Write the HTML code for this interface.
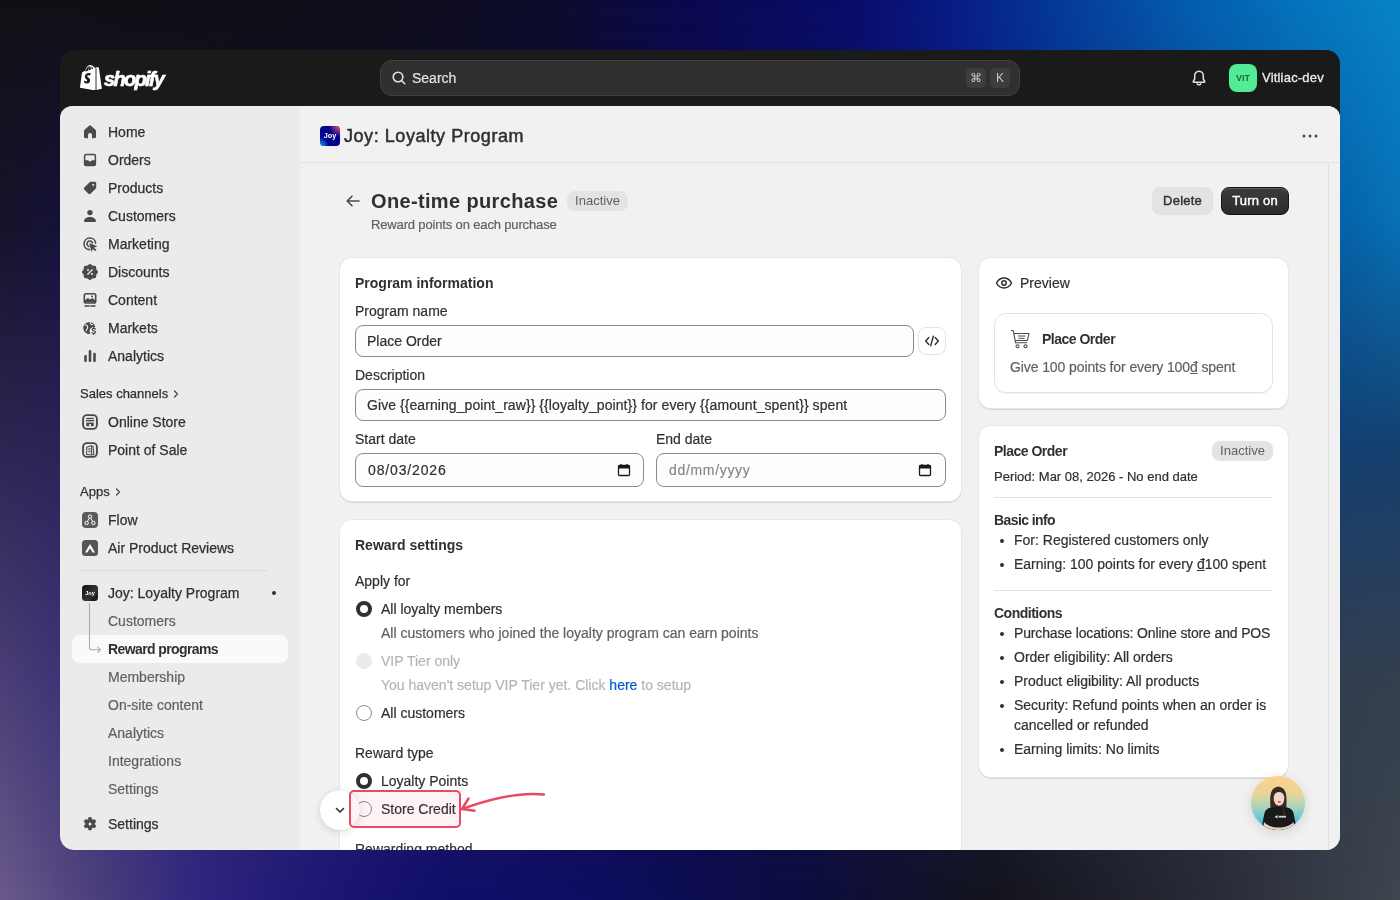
<!DOCTYPE html>
<html><head><meta charset="utf-8">
<style>
*{box-sizing:border-box;margin:0;padding:0}
html,body{width:1400px;height:900px;overflow:hidden}
body{position:relative;font-family:"Liberation Sans",sans-serif;color:#303030;background:#111}
.abs{position:absolute}
.win{will-change:transform;position:absolute;left:60px;top:50px;width:1280px;height:800px;border-radius:14px;overflow:hidden;background:#1a1a1a}
.content{position:absolute;left:0;top:56px;width:1280px;height:744px;background:#ebebeb;border-radius:12px 12px 0 0;overflow:hidden}
.main{position:absolute;left:240px;top:0;width:1040px;height:744px;background:#f1f1f1}
.t{position:absolute;white-space:nowrap;line-height:20px;font-size:14px;-webkit-text-stroke:.2px currentColor}
.t.b{-webkit-text-stroke:0}
.nav{position:absolute;left:48px;font-size:14px;line-height:20px;color:#303030;-webkit-text-stroke:0.25px #303030;white-space:nowrap}
.sub{position:absolute;left:48px;font-size:14px;line-height:20px;color:#616161;white-space:nowrap;-webkit-text-stroke:.2px #616161}
.ico{position:absolute;left:22px}
.card{position:absolute;background:#fff;border-radius:12px;box-shadow:0 1px 0 rgba(26,26,26,.07),0 0 0 1px rgba(0,0,0,.04),inset 0 -1px 0 rgba(0,0,0,.1)}
.b{font-weight:700}
.g{color:#616161}
.inp{position:absolute;border:1px solid #8a8a8a;border-radius:8px;background:#fdfdfd}
.radio{position:absolute;width:16px;height:16px;border-radius:50%;border:1px solid #8a8a8a;background:#fff}
.radio.on{border:4px solid #303030}
.badge{position:absolute;height:20px;line-height:20px;padding:0 8px;border-radius:8px;background:#e3e3e3;color:#616161;font-size:13px}
ul.bl{position:absolute;list-style:none}
</style></head><body>
<div class="abs" style="left:0;top:0;width:1400px;height:900px;background:linear-gradient(90deg,#111014 0%,#100f16 14%,#0f0e1d 28%,#0e0c2e 40%,#0a0950 50%,#0a0c6a 61%,#081c85 68%,#053896 75%,#0560b0 86%,#0574bd 93%,#0884c8 100%)"></div>
<div class="abs" style="left:0;top:0;width:1400px;height:900px;background:linear-gradient(90deg,#16132a 0%,#15123a 4.3%,#100f20 25%,#0e0c30 40%,#0a0950 50%,#081a80 70%,#0562a8 95.7%,#0870b5 100%);-webkit-mask-image:linear-gradient(180deg,transparent 0px,#000 225px)"></div>
<div class="abs" style="left:0;top:0;width:1400px;height:900px;background:linear-gradient(90deg,#2e2652 0%,#2a2458 4.3%,#0b0a50 50%,#143f70 95.7%,#153f6e 100%);-webkit-mask-image:linear-gradient(180deg,transparent 225px,#000 450px)"></div>
<div class="abs" style="left:0;top:0;width:1400px;height:900px;background:linear-gradient(90deg,#4a3e75 0%,#3e3478 4.3%,#0c0c40 50%,#323e50 95.7%,#343f4f 100%);-webkit-mask-image:linear-gradient(180deg,transparent 450px,#000 675px)"></div>
<div class="abs" style="left:0;top:0;width:1400px;height:900px;background:linear-gradient(90deg,#6a5a8a 0%,#4a3e7c 7%,#2f2680 14%,#1e1876 22%,#110e6c 31%,#0d0d60 43%,#0c0c40 57%,#13131c 71%,#282a35 86%,#3e464e 100%);-webkit-mask-image:linear-gradient(180deg,transparent 675px,#000 900px)"></div>

<div class="win">
  <!-- top bar -->
  <div id="topbar">
    <svg class="abs" style="left:20px;top:15px" width="22" height="25" viewBox="0 0 22 25">
      <path d="M15.2 3.2c0 0-.3.1-.7.2-.1-.4-.3-.8-.5-1.2C13.4 1.1 12.6.6 11.7.6c-.1 0-.1 0-.2 0l-.1-.1C11 0 10.5-.1 10 0 8.8 0 7.6.9 6.6 2.5c-.7 1.1-1.2 2.5-1.4 3.6-1.4.4-2.3.7-2.4.8-.7.2-.7.2-.8.9C1.9 8.3 0 22.8 0 22.8L15.6 25.5 15.2 3.2zM10.9 4.4c-.8.3-1.8.6-2.7.8.3-1 .8-2.1 1.4-2.7.2-.2.5-.5.9-.7.3.7.4 1.7.4 2.6zM9.6 1.3c.3 0 .6.1.8.2-.4.2-.7.5-1 .8-.8.9-1.5 2.3-1.7 3.6-.8.2-1.5.5-2.2.7C5.9 4.6 7.6 1.3 9.6 1.3zM11.700 4.2c0-.8-.1-1.900-.5-2.800 1.200.2 1.700 1.500 2 2.300-.5.1-1 .3-1.500.5z" fill="#fff"/>
      <path d="M16.300 3.100c-.1 0-.4 0-.5 0s-1.200-1.200-1.400-1.300V25.400L22 23.700S18.900 2.800 18.900 2.700c0-.1-.2-.2-.3-.2s-2.300-.4-2.300-.4z" fill="#fff"/>
      <path d="M16 3.200v22.300" stroke="#1a1a1a" stroke-width=".9"/>
      <path d="M10.900 8.300l-.8 2.300s-.7-.4-1.600-.4c-1.300 0-1.300.8-1.300 1 0 1.100 2.900 1.500 2.900 4.100 0 2-1.300 3.300-3 3.300-2 0-3.100-1.300-3.100-1.300l.5-1.800s1.100.9 1.900.9c.6 0 .8-.5.8-.8 0-1.400-2.400-1.500-2.400-3.800 0-1.900 1.400-3.800 4.200-3.800 1.100 0 1.600.3 1.600.3z" fill="#1a1a1a"/>
    </svg>
    <div class="t b" style="left:44px;top:17px;font-size:20px;line-height:24px;font-style:italic;letter-spacing:-1.7px;color:#fff;-webkit-text-stroke:.6px #fff">shopify</div>
    <div class="abs" style="left:320px;top:10px;width:640px;height:36px;border-radius:12px;background:#303030;border:1px solid #404040"></div>
    <svg class="abs" style="left:331px;top:20px" width="16" height="16" viewBox="0 0 16 16"><circle cx="7" cy="7" r="4.8" fill="none" stroke="#e3e3e3" stroke-width="1.6"/><path d="M10.500 10.500l3.200 3.200" stroke="#e3e3e3" stroke-width="1.6" stroke-linecap="round"/></svg>
    <div class="t" style="left:352px;top:18px;color:#e3e3e3">Search</div>
    <div class="abs" style="left:906px;top:18px;width:20px;height:20px;border-radius:5px;background:#3d3d3d;color:#c9c9c9;font-size:12px;line-height:20px;text-align:center">&#8984;</div>
    <div class="abs" style="left:930px;top:18px;width:20px;height:20px;border-radius:5px;background:#3d3d3d;color:#c9c9c9;font-size:12px;line-height:20px;text-align:center">K</div>
    <svg class="abs" style="left:1131px;top:19px" width="16" height="18" viewBox="0 0 16 18"><path d="M8 2.200c-2.600 0-4.300 2-4.300 4.500v3.300L2.300 12.300c-.3.500 0 .9.5.9h10.400c.5 0 .8-.4.5-.9L12.300 10V6.700C12.300 4.200 10.600 2.200 8 2.200z" fill="none" stroke="#e3e3e3" stroke-width="1.5" stroke-linejoin="round"/><path d="M6.200 14.800c.4.700 1 1 1.800 1s1.400-.3 1.800-1" fill="none" stroke="#e3e3e3" stroke-width="1.5" stroke-linecap="round"/></svg>
    <div class="abs" style="left:1169px;top:14px;width:28px;height:28px;border-radius:8px;background:#52ec94;color:#1d6a44;font-size:9px;font-weight:700;line-height:28px;text-align:center">VIT</div>
    <div class="t" style="left:1202px;top:18px;color:#ededed;font-size:13px;letter-spacing:.2px;-webkit-text-stroke:.3px #ededed">Vitliac-dev</div>
  </div>
  <div class="content">
    <div id="sidebar">
<svg class="ico" style="top:18px" width="16" height="16" viewBox="0 0 16 16"><path d="M7.100 1.700a1.400 1.400 0 0 1 1.800 0l4.600 4c.4.300.5.700.5 1.100v6c0 .8-.6 1.400-1.400 1.400H10V11a2 2 0 0 0-4 0v3.200H3.400c-.8 0-1.400-.6-1.400-1.400v-6c0-.4.200-.8.500-1.100z" fill="#4a4a4a"/></svg><div class="nav" style="top:16px">Home</div>
<svg class="ico" style="top:46px" width="16" height="16" viewBox="0 0 16 16"><path d="M4 2.600h8c.8 0 1.400.6 1.400 1.400v8c0 .8-.6 1.400-1.400 1.400H4c-.8 0-1.400-.6-1.400-1.400V4c0-.8.6-1.400 1.400-1.400z" fill="none" stroke="#4a4a4a" stroke-width="1.500"/><path d="M2 8.200h4l2 1.600 2-1.600h4V12a2 2 0 0 1-2 2H4a2 2 0 0 1-2-2z" fill="#4a4a4a"/></svg><div class="nav" style="top:44px">Orders</div>
<svg class="ico" style="top:74px" width="16" height="16" viewBox="0 0 16 16"><path d="M8.600 1.800h4.200c.8 0 1.400.6 1.400 1.400v4.200c0 .4-.1.700-.4 1l-5.300 5.300c-.6.600-1.500.600-2.100 0L2.300 9.600c-.6-.6-.6-1.500 0-2.100L7.600 2.200c.3-.3.600-.4 1-.4z" fill="#4a4a4a"/><rect x="10.400" y="4" width="1.800" height="1.800" rx=".4" fill="#ebebeb"/></svg><div class="nav" style="top:72px">Products</div>
<svg class="ico" style="top:102px" width="16" height="16" viewBox="0 0 16 16"><circle cx="8" cy="4.600" r="2.700" fill="#4a4a4a"/><path d="M2 13.100c0-2.300 2.600-4.100 6-4.100s6 1.800 6 4.100c0 .5-.4.900-.9.900H2.900c-.5 0-.9-.4-.9-.9z" fill="#4a4a4a"/></svg><div class="nav" style="top:100px">Customers</div>
<svg class="ico" style="top:130px" width="16" height="16" viewBox="0 0 16 16"><path d="M13.600 7.200A5.800 5.800 0 1 0 7.200 13.600" fill="none" stroke="#4a4a4a" stroke-width="1.600" stroke-linecap="round"/><path d="M10.400 6.800A2.800 2.800 0 1 0 6.800 10.400" fill="none" stroke="#4a4a4a" stroke-width="1.600" stroke-linecap="round"/><path d="M7.600 7.600l7.200 2.600-3 1.300 2.400 2.400-1 1-2.400-2.400-1.300 3z" fill="#4a4a4a" stroke="#4a4a4a" stroke-width=".5" stroke-linejoin="round"/></svg><div class="nav" style="top:128px">Marketing</div>
<svg class="ico" style="top:158px" width="16" height="16" viewBox="0 0 16 16"><path d="M8.00,0.40 L10.41,2.18 L13.37,2.63 L13.82,5.59 L15.60,8.00 L13.82,10.41 L13.37,13.37 L10.41,13.82 L8.00,15.60 L5.59,13.82 L2.63,13.37 L2.18,10.41 L0.40,8.00 L2.18,5.59 L2.63,2.63 L5.59,2.18z" fill="#4a4a4a" stroke="#4a4a4a" stroke-width="1.200" stroke-linejoin="round"/><path d="M5.800 10.200l4.400-4.400" stroke="#ebebeb" stroke-width="1.300" stroke-linecap="round"/><circle cx="6" cy="6" r="1" fill="#ebebeb"/><circle cx="10" cy="10" r="1" fill="#ebebeb"/></svg><div class="nav" style="top:156px">Discounts</div>
<svg class="ico" style="top:186px" width="16" height="16" viewBox="0 0 16 16"><rect x="2.300" y="1.800" width="11.400" height="9.200" rx="1.800" fill="none" stroke="#4a4a4a" stroke-width="1.600"/><path d="M3 10.300V8.200l2.800-2.300 2.200 1.600 2.200-1.400 2.800 2v2.200z" fill="#4a4a4a"/><rect x="9.200" y="3.600" width="1.800" height="1.600" fill="#4a4a4a"/><path d="M3 14h4.200M8.800 14H13" stroke="#4a4a4a" stroke-width="1.400" stroke-linecap="round"/></svg><div class="nav" style="top:184px">Content</div>
<svg class="ico" style="top:214px" width="16" height="16" viewBox="0 0 16 16"><path d="M13.200 6.800A6 6 0 1 0 8 14" fill="#4a4a4a"/><path d="M3.200 4.800c1.600.3 2.700 1.400 2.400 3-.2 1.200-1.400 1.600-1.400 3M8.200 2.200c-.2 1.200.7 2.200 2.300 2.400" fill="none" stroke="#ebebeb" stroke-width="1.100" stroke-linecap="round"/><circle cx="11.800" cy="11.200" r="4.200" fill="#ebebeb"/><path d="M13.300 9c-.4-.5-1-.7-1.600-.7-.8 0-1.500.4-1.500 1.200 0 1.500 3.200 1 3.200 2.600 0 .8-.7 1.300-1.600 1.300-.7 0-1.300-.3-1.700-.8M11.700 7.400v1M11.700 13.400v1" fill="none" stroke="#4a4a4a" stroke-width="1.300" stroke-linecap="round"/></svg><div class="nav" style="top:212px">Markets</div>
<svg class="ico" style="top:242px" width="16" height="16" viewBox="0 0 16 16"><rect x="2.200" y="7" width="2.600" height="7" rx="1.100" fill="#4a4a4a"/><rect x="6.700" y="2" width="2.600" height="12" rx="1.100" fill="#4a4a4a"/><rect x="11.200" y="4.800" width="2.600" height="9.200" rx="1.100" fill="#4a4a4a"/></svg><div class="nav" style="top:240px">Analytics</div>
<div class="t" style="left:20px;top:278px;font-size:13px;color:#303030;-webkit-text-stroke:.25px #303030">Sales channels</div><svg class="abs" style="left:111px;top:283px" width="10" height="10" viewBox="0 0 10 10"><path d="M3.500 2l3 3-3 3" fill="none" stroke="#4a4a4a" stroke-width="1.300" stroke-linecap="round" stroke-linejoin="round"/></svg>
<div class="t" style="left:20px;top:376px;font-size:13px;color:#303030;-webkit-text-stroke:.25px #303030">Apps</div><svg class="abs" style="left:53px;top:381px" width="10" height="10" viewBox="0 0 10 10"><path d="M3.500 2l3 3-3 3" fill="none" stroke="#4a4a4a" stroke-width="1.300" stroke-linecap="round" stroke-linejoin="round"/></svg>
<svg class="ico" style="top:308px" width="16" height="16" viewBox="0 0 16 16"><rect x="1.100" y="1.100" width="13.800" height="13.800" rx="3.800" fill="none" stroke="#4a4a4a" stroke-width="1.900"/><rect x="4.300" y="3.800" width="7.400" height="1.400" fill="#4a4a4a"/><path d="M3.800 5.900h8.400v.6c0 .6-.5 1-1 1s-1-.4-1.100-1c-.1.6-.6 1-1.100 1s-1-.4-1-1c0 .6-.5 1-1 1s-1-.4-1.100-1c-.1.6-.6 1-1.100 1s-1-.4-1-1z" fill="#4a4a4a"/><rect x="4.300" y="8.600" width="7.400" height="3.600" fill="#4a4a4a"/><rect x="7.100" y="10" width="1.800" height="2.200" fill="#ebebeb"/></svg><div class="nav" style="top:306px">Online Store</div>
<svg class="ico" style="top:336px" width="16" height="16" viewBox="0 0 16 16"><rect x="1.100" y="1.100" width="13.800" height="13.800" rx="3.800" fill="none" stroke="#4a4a4a" stroke-width="1.900"/><path d="M4.800 5.200l3.900-1.400 2.300.4.800 8.300-2.300.5-4.900-.6z" fill="none" stroke="#4a4a4a" stroke-width="1.100" stroke-linejoin="round"/><path d="M9.500 4.200l.2 8.900" stroke="#4a4a4a" stroke-width="1"/><path d="M8.300 6.600c-.4-.3-1.700-.3-1.700.6 0 1 1.700 1 1.700 2.100 0 .9-1.300 1-1.900.5" fill="none" stroke="#4a4a4a" stroke-width="1" stroke-linecap="round"/></svg><div class="nav" style="top:334px">Point of Sale</div>
<svg class="ico" style="top:406px" width="16" height="16" viewBox="0 0 16 16"><rect x="0" y="0" width="16" height="16" rx="4" fill="#5c5c5c"/><circle cx="8" cy="4.600" r="1.700" fill="none" stroke="#fff" stroke-width="1"/><circle cx="4.600" cy="11" r="1.700" fill="none" stroke="#fff" stroke-width="1"/><circle cx="11.400" cy="11" r="1.700" fill="none" stroke="#fff" stroke-width="1"/><path d="M7.400 6.200L5.400 9.500M8.600 6.200l2 3.300" stroke="#fff" stroke-width="1"/></svg><div class="nav" style="top:404px">Flow</div>
<svg class="ico" style="top:434px" width="16" height="16" viewBox="0 0 16 16"><rect x="0" y="0" width="16" height="16" rx="3.500" fill="#555"/><path d="M3 12.500L8 4l5 8.500h-2.400L8 8.300 5.400 12.500z" fill="#fff"/></svg><div class="nav" style="top:432px">Air Product Reviews</div>
<div class="abs" style="left:20px;top:464px;width:188px;height:1px;background:#dcdcdc"></div>
<svg class="ico" style="top:479px" width="16" height="16" viewBox="0 0 16 16"><defs><linearGradient id="jg" x1="0" y1="0" x2="1" y2="1"><stop offset="0" stop-color="#111"/><stop offset=".6" stop-color="#333"/><stop offset="1" stop-color="#111"/></linearGradient></defs><rect x="0" y="0" width="16" height="16" rx="3.500" fill="url(#jg)"/><text x="8" y="10" font-size="5.500" font-family="Liberation Sans" font-weight="700" fill="#fff" text-anchor="middle">Joy</text></svg><div class="nav" style="top:477px">Joy: Loyalty Program</div>
<div class="abs" style="left:212px;top:485px;width:4px;height:4px;border-radius:50%;background:#303030"></div>
<div class="abs" style="left:12px;top:529px;width:216px;height:28px;border-radius:8px;background:#fafafa"></div>
<svg class="abs" style="left:28px;top:495px" width="20" height="56" viewBox="0 0 20 56"><path d="M1.500 2V46c0 2 .8 2.800 2.500 2.800h8.500" fill="none" stroke="#ababab" stroke-width="1.100"/><path d="M9.800 46.200l2.600 2.600-2.600 2.600" fill="none" stroke="#ababab" stroke-width="1.100" stroke-linecap="round" stroke-linejoin="round"/></svg>
<div class="sub" style="top:505px">Customers</div>
<div class="sub" style="top:561px">Membership</div>
<div class="sub" style="top:589px">On-site content</div>
<div class="sub" style="top:617px">Analytics</div>
<div class="sub" style="top:645px">Integrations</div>
<div class="sub" style="top:673px">Settings</div>
<div class="nav b" style="top:533px;-webkit-text-stroke:0;letter-spacing:-.6px">Reward programs</div>
<svg class="ico" style="top:710px" width="16" height="16" viewBox="0 0 16 16"><path d="M6.700 1.500h2.600l.4 1.900 1.200.7 1.800-.6 1.300 2.200-1.400 1.300v1.400l1.400 1.300-1.300 2.200-1.800-.6-1.200.7-.4 1.900H6.700l-.4-1.900-1.200-.7-1.800.6-1.300-2.200 1.400-1.300V7L2 5.700l1.300-2.200 1.800.6 1.200-.7z" fill="#4a4a4a" stroke="#4a4a4a" stroke-width=".6" stroke-linejoin="round"/><circle cx="8" cy="8" r="1.500" fill="#ebebeb"/></svg><div class="nav" style="top:708px">Settings</div>
</div>
    <div class="main">
<div class="abs" style="left:0;top:56px;width:1040px;height:1px;background:#e1e1e1"></div>
<svg class="abs" style="left:20px;top:20px" width="20" height="20" viewBox="0 0 20 20"><defs><radialGradient id="jp" cx="20" cy="0" r="11" gradientUnits="userSpaceOnUse"><stop offset="0" stop-color="#f05a6a"/><stop offset="1" stop-color="#f05a6a" stop-opacity="0"/></radialGradient><radialGradient id="jc" cx="0" cy="20" r="9" gradientUnits="userSpaceOnUse"><stop offset="0" stop-color="#10b0f0"/><stop offset="1" stop-color="#10b0f0" stop-opacity="0"/></radialGradient></defs><rect width="20" height="20" rx="4" fill="#03038e"/><rect width="20" height="20" rx="4" fill="url(#jp)"/><rect width="20" height="20" rx="4" fill="url(#jc)"/><text x="10" y="12.300" font-size="7.200" font-family="Liberation Sans" font-weight="700" fill="#fff" text-anchor="middle">Joy</text></svg>
<div class="t" style="left:44px;top:18px;font-size:18px;line-height:24px;letter-spacing:.55px;-webkit-text-stroke:.5px #303030">Joy: Loyalty Program</div>
<svg class="abs" style="left:1002px;top:28px" width="16" height="4" viewBox="0 0 16 4"><circle cx="2" cy="2" r="1.500" fill="#4a4a4a"/><circle cx="8" cy="2" r="1.500" fill="#4a4a4a"/><circle cx="14" cy="2" r="1.500" fill="#4a4a4a"/></svg>
<div class="abs" style="left:1028px;top:57px;width:1px;height:700px;background:#e1e1e1"></div>
<svg class="abs" style="left:44px;top:86px" width="18" height="18" viewBox="0 0 18 18"><path d="M15 9H3.500M8 4.200L3.200 9 8 13.800" fill="none" stroke="#4a4a4a" stroke-width="1.600" stroke-linecap="round" stroke-linejoin="round"/></svg>
<div class="t b" style="left:71px;top:82px;font-size:20px;line-height:26px;letter-spacing:.35px">One-time purchase</div>
<div class="badge" style="left:267px;top:85px;width:61px;text-align:center;padding:0">Inactive</div>
<div class="t g" style="left:71px;top:109px;font-size:13px;letter-spacing:-.15px">Reward points on each purchase</div>
<div class="abs" style="left:852px;top:81px;width:61px;height:28px;border-radius:8px;background:#e3e3e3;font-size:13px;line-height:28px;text-align:center;color:#303030;-webkit-text-stroke:.4px #303030;letter-spacing:.2px">Delete</div>
<div class="abs" style="left:921px;top:81px;width:68px;height:28px;border-radius:8px;background:linear-gradient(#3b3b3b,#2c2c2c);border:1px solid #141414;box-shadow:inset 0 1px 0 rgba(255,255,255,.18);font-size:13px;line-height:26px;text-align:center;color:#fff;-webkit-text-stroke:.4px #fff;letter-spacing:.2px">Turn on</div>
<div class="card" style="left:40px;top:152px;width:621px;height:244px"></div>
<div class="t b" style="left:55px;top:167px">Program information</div>
<div class="t" style="left:55px;top:195px">Program name</div>
<div class="inp" style="left:55px;top:219px;width:559px;height:32px"></div>
<div class="t" style="left:67px;top:225px">Place Order</div>
<div class="abs" style="left:618px;top:221px;width:28px;height:28px;border-radius:8px;border:1px solid #e3e3e3;background:#fff"></div>
<svg class="abs" style="left:624px;top:227px" width="16" height="16" viewBox="0 0 16 16"><path d="M4.800 4.500L1.700 8l3.100 3.500M11.200 4.500L14.300 8l-3.100 3.500M9.300 3.200L6.700 12.800" fill="none" stroke="#303030" stroke-width="1.400" stroke-linecap="round" stroke-linejoin="round"/></svg>
<div class="t" style="left:55px;top:259px">Description</div>
<div class="inp" style="left:55px;top:283px;width:591px;height:32px"></div>
<div class="t" style="left:67px;top:289px;letter-spacing:.07px">Give {{earning_point_raw}} {{loyalty_point}} for every {{amount_spent}} spent</div>
<div class="t" style="left:55px;top:323px">Start date</div>
<div class="t" style="left:356px;top:323px">End date</div>
<div class="inp" style="left:55px;top:347px;width:289px;height:34px"></div>
<div class="t" style="left:68px;top:354px;letter-spacing:.85px">08/03/2026</div>
<svg class="abs" style="left:317px;top:357px" width="14" height="14" viewBox="0 0 14 14"><rect x="1.500" y="2.500" width="11" height="10" rx="1" fill="none" stroke="#1a1a1a" stroke-width="1.300"/><rect x="1.500" y="2.500" width="11" height="3" fill="#1a1a1a"/><path d="M4 1v2M10 1v2" stroke="#1a1a1a" stroke-width="1.300"/></svg>
<div class="inp" style="left:356px;top:347px;width:290px;height:34px"></div>
<div class="t" style="left:369px;top:354px;letter-spacing:.68px;color:#8a8a8a">dd/mm/yyyy</div>
<svg class="abs" style="left:618px;top:357px" width="14" height="14" viewBox="0 0 14 14"><rect x="1.500" y="2.500" width="11" height="10" rx="1" fill="none" stroke="#1a1a1a" stroke-width="1.300"/><rect x="1.500" y="2.500" width="11" height="3" fill="#1a1a1a"/><path d="M4 1v2M10 1v2" stroke="#1a1a1a" stroke-width="1.300"/></svg>
<div class="card" style="left:40px;top:414px;width:621px;height:400px"></div>
<div class="t b" style="left:55px;top:429px">Reward settings</div>
<div class="t" style="left:55px;top:465px">Apply for</div>
<div class="radio on" style="left:56px;top:495px"></div>
<div class="t" style="left:81px;top:493px">All loyalty members</div>
<div class="t g" style="left:81px;top:517px">All customers who joined the loyalty program can earn points</div>
<div class="radio" style="left:56px;top:547px;background:#ebebeb;border-color:#ebebeb"></div>
<div class="t" style="left:81px;top:545px;color:#b5b5b5">VIP Tier only</div>
<div class="t" style="left:81px;top:569px;color:#b5b5b5">You haven't setup VIP Tier yet. Click <span style="color:#005bd3">here</span> to setup</div>
<div class="radio" style="left:56px;top:599px"></div>
<div class="t" style="left:81px;top:597px">All customers</div>
<div class="t" style="left:55px;top:637px">Reward type</div>
<div class="radio on" style="left:56px;top:667px"></div>
<div class="t" style="left:81px;top:665px">Loyalty Points</div>
<div class="radio" style="left:56px;top:695px"></div>
<div class="t" style="left:81px;top:693px">Store Credit</div>
<div class="t" style="left:55px;top:733px">Rewarding method</div>
<div class="card" style="left:679px;top:152px;width:309px;height:151px"></div>
<svg class="abs" style="left:695px;top:169px" width="18" height="16" viewBox="0 0 18 16"><path d="M1.500 8C3.200 4.700 5.800 3 9 3s5.800 1.700 7.500 5c-1.700 3.300-4.300 5-7.500 5S3.200 11.300 1.500 8z" fill="none" stroke="#303030" stroke-width="1.500" stroke-linejoin="round"/><circle cx="9" cy="8" r="2.200" fill="none" stroke="#303030" stroke-width="1.500"/></svg>
<div class="t" style="left:720px;top:167px">Preview</div>
<div class="abs" style="left:694px;top:207px;width:279px;height:80px;border-radius:12px;border:1px solid #e3e3e3;box-shadow:0 1px 0 rgba(0,0,0,.05)"></div>
<svg class="abs" style="left:710px;top:223px" width="22" height="22" viewBox="0 0 22 22"><path d="M1 1.500h2.200l2.400 12.300h11.600" fill="none" stroke="#4a4a4a" stroke-width="1.100" stroke-linejoin="round"/><path d="M4 4.500h15l-1.600 7H5.300" fill="none" stroke="#4a4a4a" stroke-width="1.100" stroke-linejoin="round"/><path d="M8 7h7.500M8.500 9.300h6" stroke="#4a4a4a" stroke-width="1"/><circle cx="7.500" cy="17.200" r="1.500" fill="none" stroke="#4a4a4a" stroke-width="1.100"/><circle cx="15.500" cy="17.200" r="1.500" fill="none" stroke="#4a4a4a" stroke-width="1.100"/></svg>
<div class="t b" style="left:742px;top:223px;letter-spacing:-.5px">Place Order</div>
<div class="t g" style="left:710px;top:251px;letter-spacing:-.1px">Give 100 points for every 100<span style="text-decoration:underline">đ</span> spent</div>
<div class="card" style="left:679px;top:320px;width:309px;height:352px"></div>
<div class="t b" style="left:694px;top:335px;letter-spacing:-.5px">Place Order</div>
<div class="badge" style="left:912px;top:335px;width:61px;text-align:center;padding:0">Inactive</div>
<div class="t" style="left:694px;top:361px;font-size:13px">Period: Mar 08, 2026 - No end date</div>
<div class="abs" style="left:694px;top:391px;width:279px;height:1px;background:#e3e3e3"></div>
<div class="t b" style="left:694px;top:404px;letter-spacing:-.6px">Basic info</div>
<div class="abs" style="left:700px;top:433px;width:4px;height:4px;border-radius:50%;background:#303030"></div><div class="t" style="left:714px;top:424px">For: Registered customers only</div>
<div class="abs" style="left:700px;top:457px;width:4px;height:4px;border-radius:50%;background:#303030"></div><div class="t" style="left:714px;top:448px">Earning: 100 points for every <span style="text-decoration:underline">đ</span>100 spent</div>
<div class="abs" style="left:694px;top:484px;width:279px;height:1px;background:#e3e3e3"></div>
<div class="t b" style="left:694px;top:497px;letter-spacing:-.5px">Conditions</div>
<div class="abs" style="left:700px;top:526px;width:4px;height:4px;border-radius:50%;background:#303030"></div><div class="t" style="left:714px;top:517px;letter-spacing:-.15px">Purchase locations: Online store and POS</div>
<div class="abs" style="left:700px;top:550px;width:4px;height:4px;border-radius:50%;background:#303030"></div><div class="t" style="left:714px;top:541px">Order eligibility: All orders</div>
<div class="abs" style="left:700px;top:574px;width:4px;height:4px;border-radius:50%;background:#303030"></div><div class="t" style="left:714px;top:565px">Product eligibility: All products</div>
<div class="abs" style="left:700px;top:598px;width:4px;height:4px;border-radius:50%;background:#303030"></div><div class="t" style="left:714px;top:589px">Security: Refund points when an order is</div>
<div class="t" style="left:714px;top:609px">cancelled or refunded</div>
<div class="abs" style="left:700px;top:642px;width:4px;height:4px;border-radius:50%;background:#303030"></div><div class="t" style="left:714px;top:633px">Earning limits: No limits</div>
</div>
  </div>
</div>

<!-- annotation overlays (page coords) -->
<div class="abs" style="left:320px;top:790px;width:40px;height:40px;border-radius:50%;background:#fff;box-shadow:0 2px 8px rgba(0,0,0,.12),0 0 1px rgba(0,0,0,.15)"></div>
<svg class="abs" style="left:333px;top:803px" width="14" height="14" viewBox="0 0 14 14"><path d="M3.500 5.500L7 9l3.500-3.500" fill="none" stroke="#303030" stroke-width="1.600" stroke-linecap="round" stroke-linejoin="round"/></svg>
<div class="abs" style="left:349px;top:790px;width:112px;height:38px;border-radius:5px;border:2.500px solid #e84a63;background:rgba(224,67,94,.07)"></div>
<svg class="abs" style="left:440px;top:780px" width="120" height="50" viewBox="440 780 120 50"><path d="M544 794.500C520 792 495 797 462 809" fill="none" stroke="#e84a63" stroke-width="2.500" stroke-linecap="round"/><path d="M468.500 798.500L462 809l12.500 1.800" fill="none" stroke="#e84a63" stroke-width="2.500" stroke-linecap="round" stroke-linejoin="round"/></svg>
<svg class="abs" style="left:1251px;top:776px;filter:drop-shadow(0 3px 6px rgba(0,0,0,.12))" width="54" height="54" viewBox="0 0 54 54">
 <defs><linearGradient id="av" x1="0" y1="0" x2="0" y2="1"><stop offset="0" stop-color="#ffd08a"/><stop offset=".35" stop-color="#e6d598"/><stop offset=".6" stop-color="#9fd4bf"/><stop offset=".85" stop-color="#4ec4df"/><stop offset="1" stop-color="#2bbff0"/></linearGradient>
 <clipPath id="avc"><circle cx="27" cy="27" r="27"/></clipPath></defs>
 <g clip-path="url(#avc)">
  <rect width="54" height="54" fill="url(#av)"/>
  <path d="M20.500 36c-1.500-6-1.800-14-.5-19 1-4 4-6.300 7.300-6.300 3.500 0 6.500 2.300 7.500 6.500 1.200 5 .8 14-.3 21.500l-2-2-10-.5z" fill="#3b2a22"/>
  <ellipse cx="28" cy="22.500" rx="5.300" ry="7.300" fill="#f1d6ca"/>
  <path d="M22.300 20c.2-4.500 2.500-7 5.700-7s5.500 2.300 5.700 6.500c-1.200-2.200-3-3.400-5.700-3.400-2.500 0-4.500 1.500-5.700 3.900z" fill="#3b2a22"/>
  <ellipse cx="28.300" cy="25.800" rx="1.700" ry=".9" fill="#e04048"/>
  <path d="M10 54l3.500-17c.8-3 2.500-4.300 5.500-5.300 2.500-.8 5.500-1.200 9-1.200s6.500.4 9 1.200c3 1 4.700 2.300 5.500 5.300L46 54z" fill="#191a1a"/>
  <path d="M32.500 30.500c1 2.500 1.800 6 1.700 9.500l-1.500-.5c0-3.500-.5-6.500-1.500-9z" fill="#3b2a22"/>
  <path d="M13 46c3 3.500 8 5.500 14.500 5.500S40 49.500 42.500 46l1.500 8H12z" fill="#f0d2c4"/>
  <path d="M23.500 41l3-2v3.500z" fill="#bfe3da"/><rect x="27.500" y="39.800" width="7.500" height="1.800" fill="#c8d0d0"/>
 </g>
</svg>
</body></html>
